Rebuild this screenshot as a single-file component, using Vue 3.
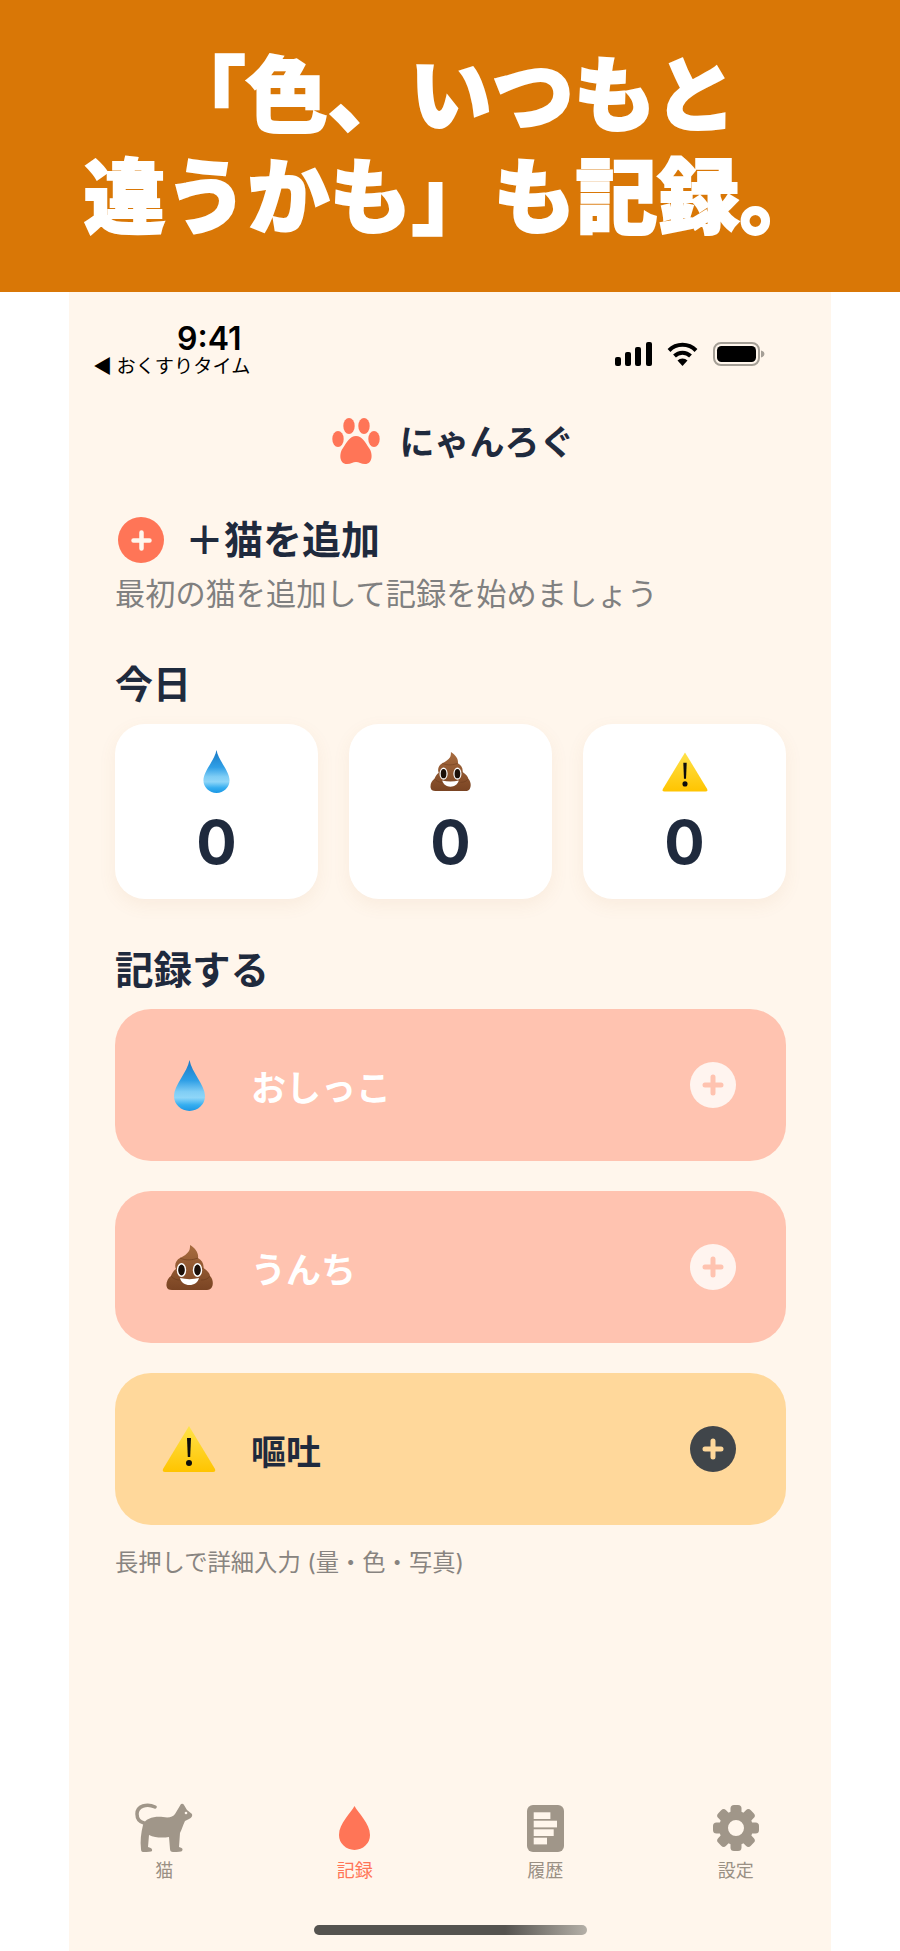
<script setup>
const stats = [
  { id: 'drop', icon: '#i-drop', w: 27, h: 43, value: 0 },
  { id: 'poop', icon: '#i-poop', w: 41, h: 39, value: 0 },
  { id: 'warn', icon: '#i-warn', w: 46, h: 40, value: 0 }
]

const actions = [
  { id: 'pee', label: 'おしっこ', icon: '#i-drop', w: 31, h: 51, kind: 'soft' },
  { id: 'poo', label: 'うんち', icon: '#i-poop', w: 47, h: 45, kind: 'soft' },
  { id: 'vomit', label: '嘔吐', icon: '#i-warn', w: 54, h: 46, kind: 'warm' }
]

const gearTeeth = [0, 45, 90, 135, 180, 225, 270, 315]
</script>

<template>
  <div class="page">
    <svg class="defs" width="0" height="0" aria-hidden="true">
      <defs>
        <linearGradient id="g-drop" x1="0" y1="0" x2="0" y2="1">
          <stop offset="0" stop-color="#1a78c4" />
          <stop offset="0.4" stop-color="#2f9fe6" />
          <stop offset="0.62" stop-color="#7fcdf5" />
          <stop offset="0.74" stop-color="#8fd6f8" />
          <stop offset="0.88" stop-color="#36aef0" />
          <stop offset="1" stop-color="#1b97e4" />
        </linearGradient>
        <linearGradient id="g-poop" x1="0" y1="0" x2="0" y2="1">
          <stop offset="0" stop-color="#a86c3f" />
          <stop offset="1" stop-color="#7a4423" />
        </linearGradient>
        <linearGradient id="g-warn" x1="0" y1="0" x2="0" y2="1">
          <stop offset="0" stop-color="#ffe24a" />
          <stop offset="1" stop-color="#ffc400" />
        </linearGradient>
        <symbol id="i-drop" viewBox="0 0 31 51">
          <path d="M15.500 0C13.500 12 0 25 0 36a15.500 15 0 0 0 31 0C31 25 17.500 12 15.500 0Z" fill="url(#g-drop)" />
        </symbol>
        <symbol id="i-poop" viewBox="0 0 47 45">
          <path d="M24 0C29 3 33 8 32 13C36 15 38 19 37.500 23C42 26 44 29 44 31C47 34 47.500 39 46 42C45 44 43 45 41 45H6C3 45 1 44 .5 41C0 37 2 33 5 31C6 28 8 25 10 24C8 20 10 15 14 13C18 11 21 9 23 6C24 4 24 2 24 0Z" fill="url(#g-poop)" />
          <path d="M14 13c6 3 13 2 18 0M10 24c2 2 3 2 5 2M37.500 23c-1 1-3 2-4 2M5 31c2 3 6 4 9 4M44 31c-2 3-5 4-9 4" fill="none" stroke="#6a3a1c" stroke-width="1" opacity="0.6" />
          <ellipse cx="15.500" cy="25" rx="4.700" ry="7" fill="#fff" />
          <ellipse cx="31.500" cy="25" rx="4.700" ry="7" fill="#fff" />
          <ellipse cx="15.500" cy="25" rx="3.300" ry="5.400" fill="#1b0f08" />
          <ellipse cx="31.500" cy="25" rx="3.300" ry="5.400" fill="#1b0f08" />
          <path d="M14 33c6 1.500 13 1.500 19 0-1 4.500-5 7-9.500 7S15 37.500 14 33Z" fill="#fff" />
        </symbol>
        <symbol id="i-warn" viewBox="0 0 54 46">
          <path d="M27 0 53 43q1 3-2 3H3q-3 0-2-3L27 0Z" fill="url(#g-warn)" />
          <path d="M25 12h4l-.8 19h-2.400L25 12Z" fill="#0d0d0d" />
          <circle cx="27" cy="37" r="3" fill="#0d0d0d" />
        </symbol>
      </defs>
    </svg>

    <header class="banner">
      <p class="banner-line first">「色、いつもと</p>
      <p class="banner-line second">違うかも」も記録。</p>
    </header>

    <div class="phone">
      <div class="status">
        <div class="status-left">
          <div class="time">9:41</div>
          <div class="back">◀ おくすりタイム</div>
        </div>
        <div class="status-right">
          <svg width="37" height="24" viewBox="0 0 37 24">
            <rect x="0" y="15" width="6" height="9" rx="2" fill="#000" />
            <rect x="10" y="10" width="6" height="14" rx="2" fill="#000" />
            <rect x="20" y="5" width="6" height="19" rx="2" fill="#000" />
            <rect x="31" y="0" width="6" height="24" rx="2" fill="#000" />
          </svg>
          <svg width="31" height="24" viewBox="0 0 31 24">
            <path d="M2 8.500a19 19 0 0 1 27 0" fill="none" stroke="#000" stroke-width="4" />
            <path d="M7.500 14a11.500 11.500 0 0 1 16 0" fill="none" stroke="#000" stroke-width="4" />
            <path d="M15.500 24 10.500 18.500a7 7 0 0 1 10 0L15.500 24Z" fill="#000" />
          </svg>
          <svg width="52" height="24" viewBox="0 0 52 24">
            <rect x="1" y="1" width="45" height="22" rx="7" fill="none" stroke="#a59f96" stroke-width="2" />
            <rect x="4" y="4" width="39" height="16" rx="4.500" fill="#000" />
            <path d="M48 8.500q3.500 1 3.500 3.500T48 15.500Z" fill="#a59f96" />
          </svg>
        </div>
      </div>

      <div class="brand">
        <svg class="paw" width="48" height="47" viewBox="0 0 48 47">
          <ellipse cx="6" cy="21" rx="5.700" ry="8" />
          <ellipse cx="17" cy="8" rx="5.700" ry="8" />
          <ellipse cx="32" cy="8" rx="5.700" ry="8" />
          <ellipse cx="42" cy="21" rx="5.700" ry="8" />
          <path d="M24 18c6 0 9 6 13 12 4 5 4 16-4 16-4 0-6-2-9-2s-5 2-9 2c-8 0-8-11-4-16 4-6 7-12 13-12Z" />
        </svg>
        <span class="brand-name">にゃんろぐ</span>
      </div>

      <main class="main">
        <div class="add-row">
          <span class="add-circle">
            <svg width="21" height="21" viewBox="0 0 21 21">
              <path d="M10.500 2.500v16M2.500 10.500h16" stroke="#fff6ec" stroke-width="4.500" stroke-linecap="round" />
            </svg>
          </span>
          <span class="add-label">＋猫を追加</span>
        </div>
        <p class="add-sub">最初の猫を追加して記録を始めましょう</p>

        <h2 class="section today">今日</h2>
        <div class="stats">
          <div v-for="stat in stats" :key="stat.id" class="stat-card">
            <div class="stat-icon">
              <svg :width="stat.w" :height="stat.h"><use :href="stat.icon" /></svg>
            </div>
            <div class="stat-value">{{ stat.value }}</div>
          </div>
        </div>

        <h2 class="section record">記録する</h2>
        <div class="actions">
          <div v-for="action in actions" :key="action.id" class="action" :class="action.kind">
            <span class="action-icon">
              <svg :width="action.w" :height="action.h"><use :href="action.icon" /></svg>
            </span>
            <span class="action-label">{{ action.label }}</span>
            <span class="action-plus">
              <svg width="22" height="22" viewBox="0 0 22 22">
                <path d="M11 3v16M3 11h16" stroke-width="5" stroke-linecap="round" />
              </svg>
            </span>
          </div>
        </div>
        <p class="hint">長押しで詳細入力 (量・色・写真)</p>
      </main>

      <nav class="tabs">
        <div class="tab">
          <span class="tab-icon">
            <svg width="58" height="50" viewBox="0 0 58 50">
              <path d="M20 4C12 0 2 3 2 11c0 5 3 8 7 9" fill="none" stroke="#a09689" stroke-width="3.500" stroke-linecap="round" />
              <path d="M8 22c2-7 12-9 20-8 6 1 10 0 12-3l6-10q2-1 3 1l3 5 5 4q1 3-3 5l-4 2c-2 4-3 8-5 12l-1 14q5 1 3 4-1 1-9 1-3 0-3-3l-1-12c-6 1-14 1-20-2l-1 12q5 1 4 4-1 1-9 1-2 0-2-3c-1-8 0-16 2-24Z" fill="#a09689" />
              <circle cx="51" cy="10" r="1.300" fill="#fff6ec" />
            </svg>
          </span>
          <span class="tab-label">猫</span>
        </div>
        <div class="tab active">
          <span class="tab-icon">
            <svg width="31" height="44" viewBox="0 0 31 44">
              <path d="M15.500 0C12 7 0 17 0 29a15.500 15 0 0 0 31 0C31 17 19 7 15.500 0Z" fill="#ff7557" />
            </svg>
          </span>
          <span class="tab-label">記録</span>
        </div>
        <div class="tab">
          <span class="tab-icon">
            <svg width="37" height="47" viewBox="0 0 37 47">
              <rect width="37" height="47" rx="6" fill="#a09689" />
              <rect x="6.700" y="7.300" width="16.700" height="6.700" fill="#fff6ec" />
              <rect x="6.700" y="15.700" width="23.300" height="6.700" fill="#fff6ec" />
              <rect x="6.700" y="24.300" width="20" height="6.700" fill="#fff6ec" />
              <rect x="6.700" y="32.700" width="13.300" height="6.700" fill="#fff6ec" />
            </svg>
          </span>
          <span class="tab-label">履歴</span>
        </div>
        <div class="tab">
          <span class="tab-icon">
            <svg width="46" height="46" viewBox="0 0 46 46">
              <rect v-for="deg in gearTeeth" :key="deg" x="17.500" y="0" width="11" height="12" rx="3.500" fill="#a09689" :transform="`rotate(${deg} 23 23)`" />
              <circle cx="23" cy="23" r="12.500" fill="none" stroke="#a09689" stroke-width="9" />
            </svg>
          </span>
          <span class="tab-label">設定</span>
        </div>
      </nav>
      <div class="home-bar"></div>
    </div>
  </div>
</template>

<style scoped>
.page {
  width: 900px;
  height: 1951px;
  background: #fff;
  display: flex;
  flex-direction: column;
  font-family: "Inter", "Noto Sans CJK JP", sans-serif;
  color: #1f2a3d;
  overflow: hidden;
}

.defs {
  position: absolute;
}

.banner {
  height: 292px;
  flex-shrink: 0;
  background: #d97706;
  padding-top: 39px;
  box-sizing: border-box;
}

.banner-line {
  margin: 0;
  height: 102px;
  line-height: 102px;
  text-align: center;
  font-family: "Noto Sans CJK JP", sans-serif;
  font-size: 82px;
  font-weight: 900;
  color: #fff;
  -webkit-text-stroke: 2px #fff;
  white-space: nowrap;
}

.banner-line.second {
  padding-left: 5px;
}

.phone {
  flex: 1;
  width: 762px;
  margin: 0 auto;
  background: #fff6ec;
  display: flex;
  flex-direction: column;
}

.status {
  height: 126px;
  box-sizing: border-box;
  padding: 32px 66px 0 24px;
  display: flex;
  justify-content: space-between;
}

.time {
  margin-left: 84px;
  font-size: 32px;
  font-weight: 600;
  line-height: 29px;
  color: #000;
}

.back {
  font-family: "Noto Sans CJK JP", sans-serif;
  font-size: 19.200px;
  line-height: 25px;
  color: #000;
}

.status-right {
  display: flex;
  gap: 15px;
  margin-top: 18px;
  height: 24px;
}

.brand {
  display: flex;
  justify-content: center;
  align-items: center;
  gap: 19px;
  height: 47px;
  padding-left: 7px;
}

.paw {
  fill: #ff7557;
}

.brand-name {
  font-size: 35px;
  font-weight: 700;
  margin-top: -4px;
}

.main {
  flex: 1;
  padding: 52px 45px 0 46px;
}

.add-row {
  display: flex;
  align-items: center;
  gap: 21px;
  height: 46px;
  padding-left: 3px;
}

.add-circle {
  width: 46px;
  height: 46px;
  border-radius: 50%;
  background: #ff7557;
  display: flex;
  align-items: center;
  justify-content: center;
}

.add-label {
  font-size: 39px;
  font-weight: 700;
  line-height: 42px;
}

.add-sub {
  margin: 15px 0 0;
  font-size: 30.200px;
  line-height: 32px;
  color: #808080;
}

.section {
  margin: 0;
  font-size: 38px;
  font-weight: 700;
  line-height: 44px;
}

.today {
  margin-top: 52px;
}

.record {
  margin-top: 49px;
  font-size: 38.500px;
}

.stats {
  display: grid;
  grid-template-columns: repeat(3, 203px);
  justify-content: space-between;
  margin-top: 18px;
}

.stat-card {
  height: 175px;
  box-sizing: border-box;
  padding-top: 26px;
  background: #fff;
  border-radius: 30px;
  box-shadow: 0 6px 18px rgba(180, 120, 70, 0.08);
  text-align: center;
}

.stat-icon {
  height: 43px;
  display: flex;
  align-items: center;
  justify-content: center;
}

.stat-value {
  margin-top: 19px;
  font-size: 60px;
  font-weight: 700;
  line-height: 60px;
}

.actions {
  display: flex;
  flex-direction: column;
  gap: 30px;
  margin-top: 17px;
}

.action {
  height: 152px;
  box-sizing: border-box;
  padding: 0 50px 0 47px;
  border-radius: 36px;
  display: flex;
  align-items: center;
}

.action.soft {
  background: #ffc3b0;
  color: #fff;
}

.action.warm {
  background: #ffd89b;
  color: #1f2a3d;
}

.action-icon {
  width: 54px;
  display: flex;
  justify-content: center;
}

.action-label {
  flex: 1;
  margin-left: 35px;
  font-size: 35px;
  font-weight: 700;
}

.action-plus {
  width: 46px;
  height: 46px;
  border-radius: 50%;
  display: flex;
  align-items: center;
  justify-content: center;
}

.soft .action-plus {
  background: #fff4ef;
  stroke: #ffc3b0;
}

.warm .action-plus {
  background: #40454a;
  stroke: #ffd89b;
}

.hint {
  margin: 23px 0 0;
  font-size: 23.300px;
  line-height: 30px;
  color: #888480;
}

.tabs {
  display: grid;
  grid-template-columns: repeat(4, 1fr);
}

.tab {
  display: flex;
  flex-direction: column;
  align-items: center;
}

.tab-icon {
  height: 50px;
  display: flex;
  align-items: center;
  justify-content: center;
}

.tab-label {
  margin-top: 6px;
  font-size: 18px;
  line-height: 24px;
  color: #9a9084;
}

.tab.active .tab-label {
  color: #ff7557;
}

.home-bar {
  width: 273px;
  height: 10px;
  margin: 42px auto 16px;
  border-radius: 5px;
  background: linear-gradient(90deg, #55534f 0%, #55534f 70%, #b5b0a8 100%);
}
</style>
